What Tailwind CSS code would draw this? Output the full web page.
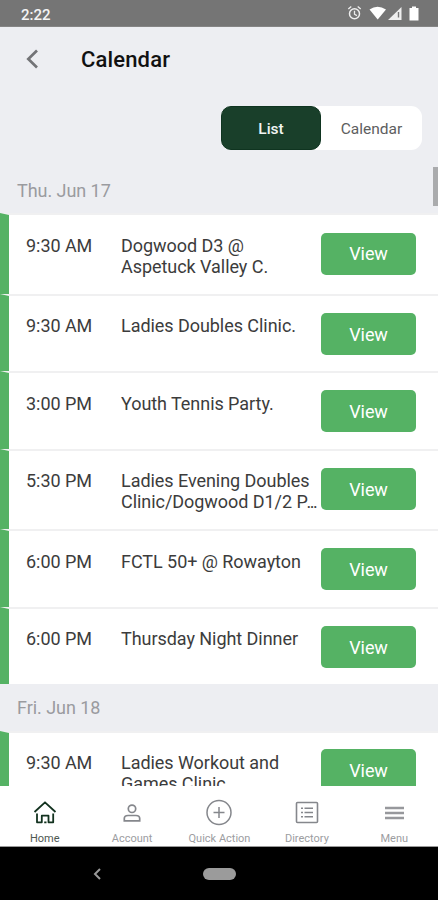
<!DOCTYPE html>
<html lang="en">
<head>
<meta charset="utf-8">
<title>Calendar</title>
<script src="https://cdn.jsdelivr.net/npm/@tailwindcss/browser@4"></script>
</head>
<body class="w-[438px] h-[900px] overflow-hidden bg-[#edeef2] font-['Roboto',sans-serif]">
<div class="relative flex flex-col h-[900px]">
  <header class="h-[27px] shrink-0 bg-[#757575] flex items-center pl-[21px] pr-[18px] border-b border-[#858585]">
    <span class="text-[15px] leading-none font-medium text-[#f4f4f4] pt-[4px]">2:22</span>
    <svg class="ml-auto" width="74" height="18" viewBox="0 0 74 18" fill="none">
      <circle cx="8.500" cy="9.800" r="5" stroke="#eee" stroke-width="1.500"/>
      <path d="M8.500 6.800v3.400l2.400 1.400M2.300 5l3-2.600M14.700 5l-3-2.600" stroke="#eee" stroke-width="1.300"/>
      <path d="M23.500 5.500Q31.500 0 40 5.500L31.700 15.500Z" fill="#fff"/>
      <path d="M55.500 3V16H42Z" fill="#eee"/><path d="M52.500 8V13.500" stroke="#777" stroke-width="1.400"/>
      <path d="M63.500 4H66V2.500H70V4H72.500V16.500H63.500Z" fill="#fff"/>
    </svg>
  </header>
  <div class="h-[79px] shrink-0 flex items-start pt-[18px] pl-[25px]">
    <svg class="mt-[4px]" width="15" height="20" viewBox="0 0 15 20" fill="none" stroke="#737477" stroke-width="2.700"><path d="M12 1.500L3.300 10L12 18.500"/></svg>
    <h1 class="ml-[41px] text-[22px] leading-[30px] font-medium tracking-[.15px] text-[#111] whitespace-nowrap">Calendar</h1>
  </div>
  <div class="shrink-0 ml-[221px] w-[201px] h-[44px] flex rounded-[11px] bg-white text-[15.500px]">
    <button class="w-[100px] rounded-[10px] bg-[#193f2a] border border-[#0f3420] text-[#f2f5f3] font-medium pt-[3px]">List</button>
    <button class="flex-1 text-[#5d5e60] pt-[3px]">Calendar</button>
  </div>
  <main class="h-[636px] shrink-0 overflow-hidden text-[18px] leading-[21px] tracking-[-.05px] text-[#3c3c3c]">
    <h2 class="h-[63px] pl-[17px] pt-[30px] text-[#9a9b9f]">Thu. Jun 17</h2>
    <article class="h-[81px] bg-white border-t-2 border-l-[9px] border-t-[#f0f0f1] border-l-[#55b264] flex items-start pl-[17px]">
      <time class="w-[95px] pt-[20px]">9:30 AM</time><p class="w-[200px] pt-[20px] whitespace-nowrap">Dogwood D3 @<br>Aspetuck Valley C.</p>
      <button class="mt-[17.500px] w-[95px] h-[42px] rounded-[5px] bg-[#55b264] text-white">View</button>
    </article>
    <article class="h-[77px] bg-white border-t-2 border-l-[9px] border-t-[#f0f0f1] border-l-[#55b264] flex items-start pl-[17px]">
      <time class="w-[95px] pt-[19px]">9:30 AM</time><p class="w-[200px] pt-[19px] whitespace-nowrap">Ladies Doubles Clinic.</p>
      <button class="mt-[17px] w-[95px] h-[42px] rounded-[5px] bg-[#55b264] text-white">View</button>
    </article>
    <article class="h-[78px] bg-white border-t-2 border-l-[9px] border-t-[#f0f0f1] border-l-[#55b264] flex items-start pl-[17px]">
      <time class="w-[95px] pt-[20px]">3:00 PM</time><p class="w-[200px] pt-[20px] whitespace-nowrap">Youth Tennis Party.</p>
      <button class="mt-[17px] w-[95px] h-[42px] rounded-[5px] bg-[#55b264] text-white">View</button>
    </article>
    <article class="h-[80px] bg-white border-t-2 border-l-[9px] border-t-[#f0f0f1] border-l-[#55b264] flex items-start pl-[17px]">
      <time class="w-[95px] pt-[19px]">5:30 PM</time><p class="w-[200px] pt-[19px] whitespace-nowrap">Ladies Evening Doubles<br>Clinic/Dogwood D1/2 <span class="tracking-[-1.200px]">P</span><span class="tracking-[-1.600px]">...</span></p>
      <button class="mt-[17px] w-[95px] h-[42px] rounded-[5px] bg-[#55b264] text-white">View</button>
    </article>
    <article class="h-[78px] bg-white border-t-2 border-l-[9px] border-t-[#f0f0f1] border-l-[#55b264] flex items-start pl-[17px]">
      <time class="w-[95px] pt-[20px]">6:00 PM</time><p class="w-[200px] pt-[20px] whitespace-nowrap">FCTL 50+ @ Rowayton</p>
      <button class="mt-[17px] w-[95px] h-[42px] rounded-[5px] bg-[#55b264] text-white">View</button>
    </article>
    <article class="h-[77px] bg-white border-t-2 border-l-[9px] border-t-[#f0f0f1] border-l-[#55b264] flex items-start pl-[17px]">
      <time class="w-[95px] pt-[19px]">6:00 PM</time><p class="w-[200px] pt-[19px] whitespace-nowrap">Thursday Night Dinner</p>
      <button class="mt-[17px] w-[95px] h-[42px] rounded-[5px] bg-[#55b264] text-white">View</button>
    </article>
    <h2 class="h-[47px] pl-[17px] pt-[13px] text-[#9a9b9f]">Fri. Jun 18</h2>
    <article class="h-[81px] bg-white border-t-2 border-l-[9px] border-t-[#f0f0f1] border-l-[#55b264] flex items-start pl-[17px]">
      <time class="w-[95px] pt-[19px]">9:30 AM</time><p class="w-[200px] pt-[19px] whitespace-nowrap">Ladies Workout and<br>Games Clinic</p>
      <button class="mt-[16px] w-[95px] h-[42px] rounded-[5px] bg-[#55b264] text-white">View</button>
    </article>
  </main>
  <nav class="h-[61px] shrink-0 bg-white grid grid-cols-5 text-[11px] leading-[12px] text-[#9c9da1] text-center border-b border-[#999] pl-px">
    <a class="flex flex-col items-center pt-[13px] text-[#4d5751]">
      <svg width="26" height="28" viewBox="0 0 26 28" fill="none" stroke="#12321f" stroke-width="1.800" stroke-linejoin="round"><path d="M2.500 13L13 3.300L23.500 13M5 14.500V23.300H9.800V16.700H16.500V23.300H21.200V14.500M12.200 23.300H14.500"/></svg>
      <span class="mt-[6px]">Home</span></a>
    <a class="flex flex-col items-center pt-[13px]">
      <svg width="26" height="28" viewBox="0 0 26 28" fill="none" stroke="#85878c" stroke-width="1.700"><circle cx="13" cy="9.800" r="3.700"/><path d="M5.300 21.800V19.500Q5.300 16.500 9 16.500H17Q20.700 16.500 20.700 19.500V21.800Z"/></svg>
      <span class="mt-[6px]">Account</span></a>
    <a class="flex flex-col items-center pt-[13px]">
      <svg width="28" height="28" viewBox="0 0 28 28" fill="none" stroke="#85878c" stroke-width="1.500"><circle cx="14" cy="13.500" r="12"/><path d="M14 8V19M8.500 13.500H19.500"/></svg>
      <span class="mt-[6px] whitespace-nowrap">Quick Action</span></a>
    <a class="flex flex-col items-center pt-[13px]">
      <svg width="26" height="28" viewBox="0 0 26 28" fill="none" stroke="#85878c" stroke-width="1.600"><rect x="2.500" y="3.500" width="21" height="20" rx="1"/><path d="M7 9.200H9M7 13.500H9M7 17.800H9M10.500 9.200H19M10.500 13.500H19M10.500 17.800H19"/></svg>
      <span class="mt-[6px]">Directory</span></a>
    <a class="flex flex-col items-center pt-[13px]">
      <svg width="26" height="28" viewBox="0 0 26 28" fill="none" stroke="#97989c" stroke-width="2.400"><path d="M4 9H23M4 14H23M4 19H23"/></svg>
      <span class="mt-[6px]">Menu</span></a>
  </nav>
  <footer class="flex-1 bg-black flex items-start pl-[92px] pt-[20px]">
    <svg width="10" height="14" viewBox="0 0 10 14" fill="none" stroke="#999" stroke-width="2"><path d="M8 2L3 7L8 12"/></svg>
    <div class="ml-[101px] w-[33px] h-[12px] mt-px rounded-full bg-[#9b9b9b]"></div>
  </footer>
  <div class="absolute right-0 top-[167px] w-[5px] h-[39px] bg-[#aaabad]"></div>
</div>
</body>
</html>
